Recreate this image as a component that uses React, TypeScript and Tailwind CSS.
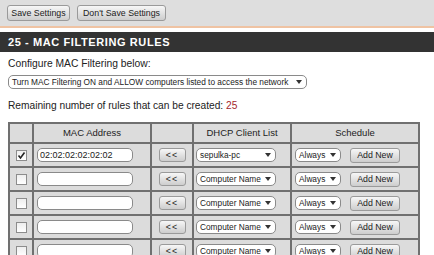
import { ReactNode } from 'react';

const font = { fontFamily: '"Liberation Sans", Arial, sans-serif' };

function Btn({ children, className = '' }: { children: ReactNode; className?: string }) {
  return (
    <div
      className={`flex items-center justify-center whitespace-nowrap rounded-[3px] border border-[#9a9a9a] bg-gradient-to-b from-[#f7f7f7] to-[#cdcdcd] text-[8.8px] leading-none text-[#222] ${className}`}
    >
      {children}
    </div>
  );
}

function Arrow() {
  return (
    <svg width="6" height="4" viewBox="0 0 6 4" className="shrink-0">
      <path d="M0 0 L6 0 L3 4 Z" fill="#333" />
    </svg>
  );
}

function Select({ label, className = '' }: { label: string; className?: string }) {
  return (
    <div
      className={`flex h-[14px] items-center justify-between gap-[3px] whitespace-nowrap rounded-[5px] border border-[#8a8a8a] bg-white pl-[3px] pr-[4px] text-[8.3px] leading-none text-[#222] ${className}`}
    >
      <span>{label}</span>
      <Arrow />
    </div>
  );
}

function Check({ on }: { on?: boolean }) {
  return (
    <div className="mx-auto flex h-[11px] w-[11px] items-center justify-center border border-[#8c8c8c] bg-gradient-to-b from-[#eeeeee] to-white">
      {on && (
        <svg width="9" height="9" viewBox="0 0 9 9">
          <path d="M1.5 4.5 L3.5 7 L7.5 1.5" stroke="#222" strokeWidth="1.6" fill="none" />
        </svg>
      )}
    </div>
  );
}

const rows = [
  { mac: '02:02:02:02:02:02', client: 'sepulka-pc', on: true },
  { mac: '', client: 'Computer Name' },
  { mac: '', client: 'Computer Name' },
  { mac: '', client: 'Computer Name' },
  { mac: '', client: 'Computer Name' },
];

export default function App() {
  const td = 'border-2 border-[#707070] p-0';
  return (
    <div className="h-[255px] w-[434px] overflow-hidden bg-white text-[#222]" style={font}>
      {/* top buttons */}
      <div className="flex h-[26px] items-start gap-[7px] bg-[#dedede] pl-[7px] pt-[5px]">
        <Btn className="h-[16px] w-[63px]">Save Settings</Btn>
        <Btn className="h-[16px] w-[89px]">Don't Save Settings</Btn>
      </div>
      <div className="h-[2px] bg-[#efc3a3]" />
      <div className="h-[4px] bg-white" />
      <div className="flex h-[20px] items-center bg-[#333333] pl-[8px] text-[11px] font-bold tracking-[0.6px] text-white">
        25 - MAC FILTERING RULES
      </div>

      <div className="pl-[8px]">
        <div className="mt-[5px] whitespace-nowrap text-[10.3px] leading-[14px]">Configure MAC Filtering below:</div>
        <Select
          label="Turn MAC Filtering ON and ALLOW computers listed to access the network"
          className="mt-[4px] w-[299px] !text-[8.3px]"
        />
        <div className="mt-[10px] whitespace-nowrap text-[10.2px] leading-[14px]">
          Remaining number of rules that can be created: <span className="text-[#a4262c]">25</span>
        </div>

        <table className="mt-[9px] border-collapse border-2 border-[#707070] bg-[#dcdcdc] text-[9.5px]">
          <thead>
            <tr className="h-[20px]">
              <td className={`${td} w-[24px]`} />
              <td className={`${td} w-[118px] text-center`}>MAC Address</td>
              <td className={`${td} w-[42px]`} />
              <td className={`${td} w-[98px] text-center`}>DHCP Client List</td>
              <td className={`${td} w-[128px] text-center`}>Schedule</td>
            </tr>
          </thead>
          <tbody>
            {rows.map((r, i) => (
              <tr key={i} className="h-[24px]">
                <td className={td}>
                  <Check on={r.on} />
                </td>
                <td className={td}>
                  <div className="mx-[3px] flex h-[14px] w-[96px] items-center whitespace-nowrap rounded-[5px] border border-[#8a8a8a] bg-white px-[2px] text-[9px] leading-none">
                    {r.mac}
                  </div>
                </td>
                <td className={td}>
                  <Btn className="mx-auto h-[14px] w-[27px] tracking-[1px]">&lt;&lt;</Btn>
                </td>
                <td className={td}>
                  <Select label={r.client} className="ml-[2px] w-[80px]" />
                </td>
                <td className={td}>
                  <div className="flex items-center gap-[9px] pl-[3px]">
                    <Select label="Always" className="w-[46px]" />
                    <Btn className="h-[15px] w-[50px]">Add New</Btn>
                  </div>
                </td>
              </tr>
            ))}
          </tbody>
        </table>
      </div>
    </div>
  );
}
